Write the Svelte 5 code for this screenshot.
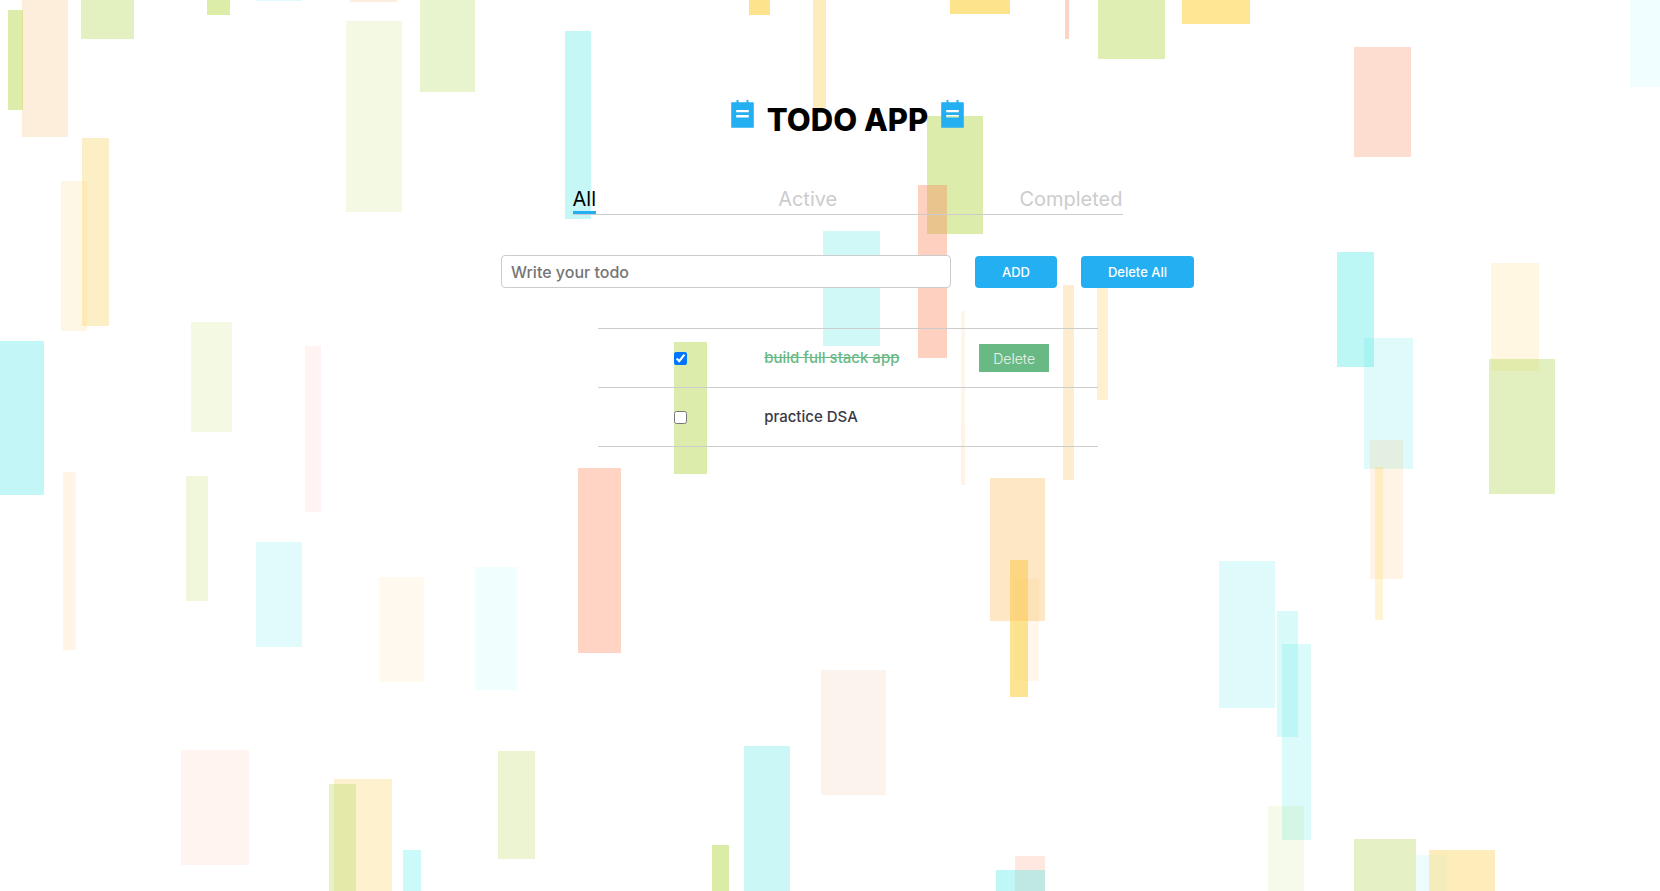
<script>
  // Confetti bars: left, top, right, bottom, tint on white
  const bars = [
    [8, 10, 23, 110, 'dcedaa'], [22, -4, 68, 137, 'fdeedb'], [81, -4, 134, 39, 'e3f0bf'],
    [207, -4, 230, 15, 'dbeda6'], [255, -4, 302, 1, 'e2fafb'], [350, -4, 397, 2, 'fdeddc'],
    [346, 21, 402, 212, 'f4f9e3'], [420, -4, 475, 92, 'e8f4cd'], [61, 181, 87, 331, 'fff7e5'],
    [82, 138, 109, 326, 'fdefc5'], [191, 322, 232, 432, 'f4f9e3'], [-4, 341, 44, 495, 'c2f6f7'],
    [305, 346, 321, 512, 'fff4f1'], [63, 472, 76, 650, 'fff4e6'], [186, 476, 208, 601, 'f1f7db'],
    [256, 542, 302, 647, 'e1fbfc'], [379, 577, 424, 682, 'fff9ee'], [475, 567, 517, 690, 'f1fefe'],
    [565, 31, 591, 219, 'c5f7f6'], [749, -4, 770, 15, 'fde38b'], [813, -4, 826, 110, 'fdedbc'],
    [950, -4, 1010, 14, 'fde38c'], [1065, -4, 1069, 39, 'ffd4c4'], [927, 116, 983, 234, 'dbecab'],
    [918, 185, 947, 358, 'fed0bf'], [823, 231, 880, 346, 'cff8f7'], [1098, -4, 1165, 59, 'dfefb3'],
    [1182, -4, 1250, 24, 'fee694'], [1354, 47, 1411, 157, 'feddd1'], [1630, -4, 1664, 87, 'f1feff'],
    [1337, 252, 1374, 367, 'bcf6f5'], [1491, 263, 1539, 371, 'fff7e1'], [1063, 285, 1074, 480, 'feecd1'],
    [1097, 270, 1108, 400, 'fff1cf'], [1364, 338, 1413, 469, 'defafb'], [1370, 440, 1403, 579, 'fff4e5'],
    [1375, 467, 1383, 620, 'fff4d3'], [1489, 359, 1555, 494, 'e2efbe'], [1219, 561, 1275, 708, 'defafb'],
    [1277, 611, 1298, 737, 'd8faf9'], [1282, 644, 1311, 840, 'dafbfa'], [1268, 806, 1304, 895, 'f6faea'],
    [1354, 839, 1416, 895, 'e5f1c5'], [1416, 855, 1447, 895, 'edfdfd'], [1429, 850, 1495, 895, 'feedbb'],
    [674, 342, 707, 474, 'dcedab'], [578, 468, 621, 653, 'ffd4c4'], [961, 311, 965, 424, 'fff5ea'],
    [961, 424, 965, 485, 'fff3e3'], [1015, 579, 1039, 681, 'fff7eb'], [1010, 560, 1028, 697, 'fde493'],
    [990, 478, 1045, 621, 'fde7c5'], [821, 670, 886, 795, 'fdf3ed'], [744, 746, 790, 895, 'cbf7f6'],
    [712, 845, 729, 895, 'daeca6'], [498, 751, 535, 859, 'ecf4d1'], [1015, 856, 1045, 895, 'ffe8df'],
    [996, 870, 1045, 895, 'bff6f6'], [181, 750, 249, 865, 'fff4f0'], [334, 779, 392, 895, 'fef1ce'],
    [329, 784, 356, 895, 'e6f2c8'], [403, 850, 421, 895, 'ccf9fa']
  ];

  // Turns a tint into a saturated translucent colour, so that crossing bars blend
  function glaze(hex) {
    const drop = [0, 2, 4].map((i) => 255 - parseInt(hex.slice(i, i + 2), 16));
    const alpha = (Math.max(...drop) / 255) * 1.6;
    const rgb = drop.map((d) => Math.round(255 - d / alpha));
    return `rgba(${rgb.join(',')},${alpha.toFixed(3)})`;
  }

  const tabs = ['All', 'Active', 'Completed'];
  let tab = $state('All');
  let draft = $state('');
  let nextId = 3;
  let todos = $state([
    { id: 1, text: 'build full stack app', done: true },
    { id: 2, text: 'practice DSA', done: false }
  ]);
  let shown = $derived(
    todos.filter((t) => tab === 'All' || (tab === 'Completed') === t.done)
  );

  function add(event) {
    event.preventDefault();
    if (!draft.trim()) return;
    todos.push({ id: nextId++, text: draft.trim(), done: false });
    draft = '';
  }
  function remove(id) {
    todos = todos.filter((t) => t.id !== id);
  }
</script>

{#snippet notepad()}
  <svg class="notepad" viewBox="0 0 23 28" aria-hidden="true">
    <path
      fill="#23aff1"
      fill-rule="evenodd"
      d="M5.5 0h2v2.3h8V0h2v2.3h4.8a.5.5 0 0 1 .5.5v24.5a.5.5 0 0 1-.5.5H.7a.5.5 0 0 1-.5-.5V2.8a.5.5 0 0 1 .5-.5h4.8zM5.2 10h12.6v2.2H5.2zM5.2 15.1h12.6v2.4H5.2z"
    />
  </svg>
{/snippet}

<div class="page">
  <svg class="confetti" viewBox="0 0 1660 891" preserveAspectRatio="xMidYMin slice" aria-hidden="true">
    {#each bars as [x1, y1, x2, y2, tint]}
      <rect x={x1} y={y1} width={x2 - x1} height={y2 - y1} fill={glaze(tint)} />
    {/each}
  </svg>

  <main>
    <h1>
      {@render notepad()}
      <span>TODO APP</span>
      {@render notepad()}
    </h1>

    <nav>
      {#each tabs as name}
        <button type="button" class="tab" class:current={tab === name} onclick={() => (tab = name)}>{name}</button>
      {/each}
    </nav>

    <form onsubmit={add}>
      <input class="draft" type="text" aria-label="Write your todo" placeholder="Write your todo" bind:value={draft} />
      <button class="action" type="submit">ADD</button>
      <button class="action" type="button" onclick={() => (todos = [])}>Delete All</button>
    </form>

    <ul>
      {#each shown as todo (todo.id)}
        <li>
          <input id="todo-{todo.id}" type="checkbox" bind:checked={todo.done} />
          <label for="todo-{todo.id}" class:done={todo.done}>{todo.text}</label>
          {#if todo.done}
            <button class="delete" type="button" onclick={() => remove(todo.id)}>Delete</button>
          {/if}
        </li>
      {/each}
    </ul>
  </main>
</div>

<style>
  :global(body) {
    margin: 0;
    background: #fff;
  }
  .page {
    position: relative;
    min-height: 100vh;
    overflow: hidden;
    font-family: Inter, 'Liberation Sans', sans-serif;
  }
  .confetti {
    position: absolute;
    inset: 0;
    width: 100%;
    height: 100%;
  }
  main {
    position: relative;
    display: flex;
    flex-direction: column;
    align-items: center;
    gap: 40px;
    padding: 100px 0 40px 35px;
  }
  h1 {
    display: flex;
    justify-content: center;
    gap: 13px;
    margin: 0 0 7px;
    font-size: 31px;
    font-weight: 800;
    line-height: 40px;
    color: #000;
  }
  .notepad {
    width: 23px;
    height: 28px;
  }
  button {
    font-family: inherit;
    cursor: pointer;
  }
  nav {
    display: flex;
    justify-content: space-between;
    box-sizing: border-box;
    width: 100%;
    max-width: 550px;
    border-bottom: 1px solid #ccc;
  }
  .tab {
    padding: 0;
    border: 0;
    border-bottom: 3px solid transparent;
    background: none;
    font-size: 20px;
    line-height: 24px;
    color: #ccc;
  }
  .current {
    border-color: #23aff1;
    color: #000;
  }
  form {
    display: flex;
    align-items: flex-end;
    gap: 24px;
    max-width: 100%;
  }
  .draft {
    box-sizing: border-box;
    flex: 0 1 450px;
    width: 450px;
    min-width: 0;
    height: 33px;
    padding: 0 9px;
    border: 1px solid #ccc;
    border-radius: 4px;
    background: #fff;
    font-family: inherit;
    font-size: 16px;
    font-weight: 500;
  }
  .draft::placeholder {
    color: #757575;
  }
  .action {
    height: 32px;
    padding: 0 27px;
    border: 0;
    border-radius: 4px;
    background: #23aff1;
    font-size: 13px;
    font-weight: 500;
    color: #fff;
    white-space: nowrap;
  }
  ul {
    width: 100%;
    max-width: 500px;
    margin: 0;
    padding: 0;
    border-top: 1px solid #ccc;
    list-style: none;
  }
  li {
    display: grid;
    grid-template-columns: repeat(3, 1fr);
    align-items: center;
    min-height: 28px;
    padding: 15px 0;
    border-bottom: 1px solid #ccc;
  }
  li input {
    justify-self: center;
    width: 13px;
    height: 13px;
    margin: 0;
  }
  label {
    font-size: 15px;
    font-weight: 500;
    line-height: 20px;
    color: #3b3846;
    white-space: nowrap;
  }
  .done {
    color: #69b985;
    text-decoration: line-through;
  }
  .delete {
    justify-self: center;
    height: 28px;
    padding: 0 14px;
    border: 0;
    background: #69b985;
    font-size: 14px;
    font-weight: 300;
    color: #eef3ee;
  }
</style>
